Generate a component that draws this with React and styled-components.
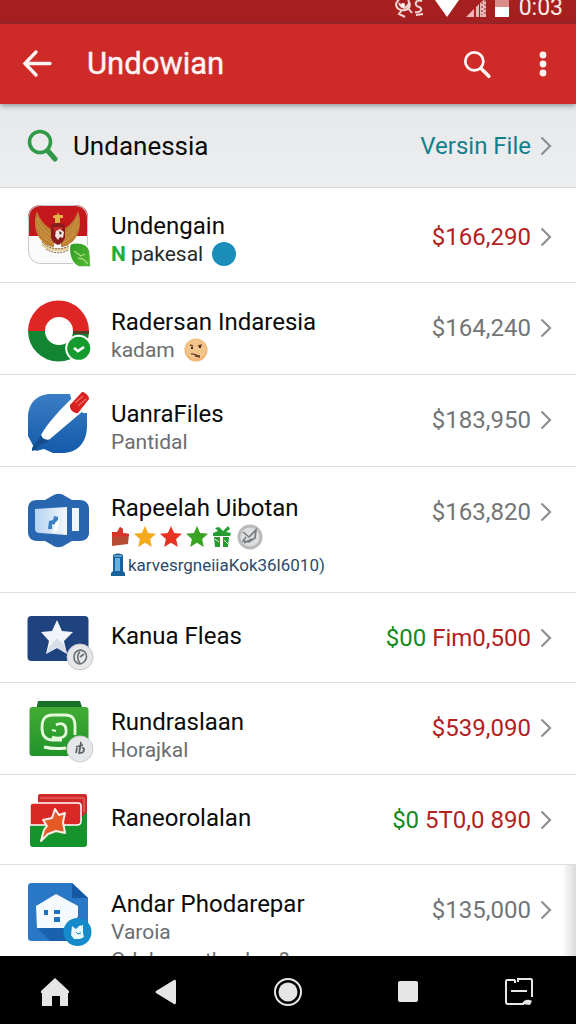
import React from "react";
import styled, { createGlobalStyle, css } from "styled-components";

const Global = createGlobalStyle`
  *, *::before, *::after { box-sizing: border-box; }
  body { margin: 0; font-family: Roboto, "Liberation Sans", sans-serif; background: #fff; color: #0b0b0b; }
  h1, h2, p, ul { margin: 0; padding: 0; }
  a { color: inherit; text-decoration: none; }
  button { border: 0; padding: 0; background: none; color: inherit; cursor: pointer; display: flex; align-items: center; justify-content: center; }
  svg { display: block; flex: none; }
`;

const Screen = styled.div`
  display: flex;
  flex-direction: column;
  height: 100vh;
  overflow: hidden;
`;

const StatusBar = styled.div`
  flex: none;
  display: flex;
  justify-content: flex-end;
  height: 24px;
  padding-right: 13px;
  overflow: hidden;
  background: #a62020;
  color: #fbeceb;
`;

const Clock = styled.span`
  margin-left: 10px;
  font-size: 23px;
  line-height: 16px;
`;

const AppBar = styled.header`
  position: relative;
  flex: none;
  display: flex;
  align-items: center;
  height: 80px;
  padding: 0 18px 0 20px;
  background: #cd2a28;
  color: #fff4f2;
  box-shadow: 0 1px 6px rgba(60, 60, 70, 0.6);
`;

const AppTitle = styled.h1`
  flex: 1;
  margin-left: 33px;
  font-size: 31px;
  line-height: 40px;
  font-weight: 400;
  -webkit-text-stroke: 0.4px currentColor;
`;

const IconButton = styled.button`
  width: ${(p) => p.$w}px;
  height: 48px;
  margin-left: ${(p) => p.$gap || 0}px;
`;

const FilterBar = styled.div`
  flex: none;
  display: flex;
  align-items: center;
  height: 84px;
  padding: 0 24px 0 26px;
  background: linear-gradient(#e6e8eb, #eceeef);
  border-bottom: 1px solid #d6d9dc;
`;

const FilterInput = styled.input`
  flex: 1;
  min-width: 0;
  margin-left: 15px;
  padding: 0;
  border: 0;
  outline: 0;
  background: none;
  color: #0b0b0b;
  font: 400 26px/32px Roboto, "Liberation Sans", sans-serif;
`;

const FilterLink = styled.a`
  display: flex;
  align-items: center;
  gap: 9px;
  color: #137f8c;
  font-size: 24px;
  line-height: 30px;
`;

const List = styled.ul`
  flex: 1;
  min-height: 0;
  overflow: hidden;
  list-style: none;
`;

const rowHeights = { lead: 95, double: 92, single: 90, triple: 126 };
const copyTops = { lead: 10, double: 11, single: 15, triple: 13 };

const Row = styled.li`
  min-height: ${(p) => rowHeights[p.$kind]}px;
  border-bottom: 1px solid #dcdfe1;
  ${(p) =>
    p.$shade &&
    css`
      background: linear-gradient(to left, rgba(0, 0, 0, 0.14), rgba(0, 0, 0, 0) 14px);
    `}
`;

const RowLink = styled.a`
  display: flex;
  align-items: flex-start;
  padding: 14px 24px 0;
`;

const Copy = styled.div`
  flex: 1;
  min-width: 0;
  margin-left: 14px;
  padding-top: ${(p) => copyTops[p.$kind]}px;
  white-space: nowrap;
`;

const RowTitle = styled.h2`
  font-size: 24px;
  line-height: 28px;
  font-weight: 400;
`;

const Sub = styled.p`
  display: flex;
  align-items: center;
  gap: 9px;
  font-size: 21px;
  line-height: 28px;
  color: ${(p) => p.$color || "#6b6d70"};
`;

const Badges = styled.div`
  display: flex;
  align-items: center;
  height: 30px;
  gap: 4px;
`;

const Code = styled.p`
  display: flex;
  align-items: center;
  gap: 3px;
  font-size: 17px;
  line-height: 26px;
  color: #2b4a6c;
`;

const Tag = styled.b`
  font-weight: 700;
  color: #1fae38;
`;

const Dot = styled.span`
  width: 24px;
  height: 24px;
  border-radius: 50%;
  background: #1a8dbb;
`;

const Amount = styled.div`
  display: flex;
  align-items: center;
  gap: 9px;
  padding-top: ${(p) => (p.$kind === "lead" ? 20 : 16)}px;
  font-size: 24px;
  line-height: 30px;
  white-space: nowrap;
  color: ${(p) => (p.$tone === "red" ? "#b3211f" : "#737577")};
`;

const Gain = styled.span`
  color: #168a1c;
`;

const NavBar = styled.nav`
  flex: none;
  display: grid;
  grid-template-columns: 110fr 112fr 132fr 108fr 114fr;
  align-items: center;
  height: 68px;
  padding-top: 3px;
  background: #000;
  color: #e6e6e6;
`;

const NavButton = styled.button`
  height: 56px;
`;

const Chevron = () => (
  <svg width="12" height="22" viewBox="0 0 12 22" fill="none" stroke="#8d9093" strokeWidth="2.2">
    <path d="M1.500 2.500 10 11 1.500 19.500" />
  </svg>
);

const Magnifier = ({ size, w }) => (
  <svg width={size} height={size} viewBox="0 0 32 32" fill="none" stroke="currentColor" strokeLinecap="round">
    <circle cx="12.5" cy="12.5" r="10" strokeWidth={w} />
    <path d="M20 20.5 28.5 29" strokeWidth={w + 1} />
  </svg>
);

const STAR = "M0-12 3.4-4.4 12-3.6 5.6 2.2 7.4 11 0 6.4-7.4 11-5.6 2.2-12-3.6-3.4-4.4Z";

const Star = ({ color }) => (
  <svg width="22" height="24" viewBox="-12 -12.5 24 25">
    <path d={STAR} fill={color} />
  </svg>
);

const Art = ({ children }) => (
  <svg width="73" height="70" viewBox="0 0 73 70" aria-hidden="true">
    {children}
  </svg>
);

const Garuda = () => (
  <Art>
    <defs>
      <clipPath id="flag"><rect x="4" y="3" width="60" height="59" rx="12" /></clipPath>
      <linearGradient id="leaf" x2="1" y2="1"><stop stopColor="#2c9c25" /><stop offset="1" stopColor="#56b832" /></linearGradient>
    </defs>
    <g clipPath="url(#flag)">
      <path fill="#fafafa" d="M4 3h60v60H4z" />
      <path fill="#c5181c" d="M4 3h60v31H4z" />
    </g>
    <rect x="4.5" y="3.5" width="59" height="58" rx="12" fill="none" stroke="#c9c9cd" />
    <g fill="#bd8134">
      <path d="M13 9c-4 11-2 22 4 29 4 5 9 7 13 7V29C22 25 15 17 13 9Z" />
      <path d="M54 9c4 11 2 22-4 29-4 5-9 7-13 7V29C45 25 52 17 54 9Z" />
    </g>
    <g fill="none" stroke="#d6a253" strokeWidth="0.8">
      <path d="M13 16c3 9 9 15 16 18M13 23c4 8 9 12 16 15M16 31c4 5 8 8 13 10M54 16c-3 9-9 15-16 18M54 23c-4 8-9 12-16 15M51 31c-4 5-8 8-13 10" />
    </g>
    <path d="M31 13h2l1-3 1 3h4v3h-3v6h-5v-6h-2v-2z" fill="#e3b247" />
    <path d="M27 23c4-3 10-3 14 0v13c-2 4-4 6-7 7-3-1-5-3-7-7z" fill="#8c1b1d" />
    <path d="M29 25h10l-3 6h-5z" fill="#c62a25" /><path d="m32 29 4-2 4 3-1 6-3-1-2 3-3-4z" fill="#f7e3df" />
    <path d="m35 29 3 2-2 2z" fill="#302024" />
    <path d="M18 42c8 8 24 8 32 0" fill="none" stroke="#e5cf9c" strokeWidth="3" />
    <path d="M18 40c8 9 24 9 32 0M22 47c7 5 17 5 24 0" fill="none" stroke="#735b3c" strokeWidth="0.9" strokeDasharray="2 1" />
    <path d="M46 42c8-3 19-1 20 8l1 15H55c-8-3-11-14-9-23Z" fill="url(#leaf)" stroke="#fff" strokeWidth="1.5" />
    <path d="m50 49 7 5 4-2M54 56l5 1 5 5" fill="none" stroke="#a5db80" strokeWidth="1.3" />
  </Art>
);

const Ring = () => (
  <Art>
    <path d="M4 34a30.500 30.500 0 0 1 61 0H49a14 14 0 0 0-28 0Z" fill="#de2624" />
    <path d="M4 34a30.500 30.500 0 0 0 61 0H49a14 14 0 0 1-28 0Z" fill="#128432" />
    <path d="M49 34h16v3H49z" fill="#543f23" />
    <circle cx="54.700" cy="51.300" r="13.500" fill="#fff" />
    <circle cx="54.700" cy="51.300" r="11.500" fill="#159b2e" />
    <path d="m50 51 4 3 6-4" fill="none" stroke="#fff" strokeWidth="2.700" />
  </Art>
);

const Pen = () => (
  <Art>
    <defs><linearGradient id="pen" x2="0" y2="1"><stop stopColor="#3b7ec5" /><stop offset="1" stopColor="#145aa9" /></linearGradient></defs>
    <path d="M27 5h20l16 16v16C63 54 53 64 38 64H29L20 60 12 62 4 47V29C4 14 13 5 27 5Z" fill="url(#pen)" />
    <path d="M45 2h22v22h-8L48 12Z" fill="#fff" />
    <path d="M48 9 59 22 26 50c-3 2-9-1-9-4 8-14 20-26 31-37Z" fill="#fff" />
    <path d="M58 3c2-1 8 5 7 7L54 24c-4 1-9-4-8-8Z" fill="#d7201f" />
    <path d="m51 14 8-7M54 17l8-7" stroke="#f16960" strokeWidth="1.500" fill="none" />
    <path d="m17 46 2 4 6 2c-6 4-11 3-13 9l-4 1c-1-6 5-7 9-16Z" fill="#154d8d" />
  </Art>
);

const Camera = () => (
  <Art>
    <defs><linearGradient id="screen" x2="1" y2="0"><stop stopColor="#b5d3f1" /><stop offset="1" stopColor="#f2f8fe" /></linearGradient></defs>
    <path d="M13 19h8l7-4c5-3 9-3 13 0l7 4h8c6 0 9 4 9 9v24c0 5-4 8-9 8h-8l-7 4c-4 3-9 3-13 0l-7-4h-8c-6 0-9-4-9-9V28c0-6 3-9 9-9Z" fill="#2867af" />
    <path d="m11 28 32-2v28l-27-2q-5 0-5-4Z" fill="url(#screen)" />
    <path d="M48 27h7v23h-7z" fill="#eef7ff" />
    <path d="m25 40 4-1 1-4 4 1v6l-2 2-4-1v5h-4z" fill="#3b82c4" /><path d="m31 42 4-4-1 12-5 2z" fill="#fff" />
  </Art>
);

const StarFlag = () => (
  <Art>
    <rect x="3.500" y="9" width="61" height="45" rx="4" fill="#1f437e" />
    <path d="M33 13 38 24 49 25 40 34 43 47 33 41 22 47 25 34 17 25 28 24Z" fill="#f1f4f9" />
    <path d="m25 40 8-9 8 8 2 8-10-6-11 6Z" fill="#c9d1e0" opacity=".6" />
    <circle cx="56" cy="50" r="13" fill="#e6e7e9" stroke="#c7c8cb" />
    <path d="M61 45c-5-4-11-1-11 5 0 6 6 9 10 5 3-3 3-7 1-10ZM56 45c-3 2-3 8 0 11M56 50l4-3" fill="none" stroke="#6d6f72" strokeWidth="1.600" />
  </Art>
);

const Box = () => (
  <Art>
    <defs><linearGradient id="box" x2="0" y2="1"><stop stopColor="#42ac34" /><stop offset="1" stopColor="#22932b" /></linearGradient></defs>
    <path d="M14 4h42l3 9H12Z" fill="#167126" />
    <rect x="5.500" y="10" width="59" height="49" rx="3" fill="url(#box)" />
    <path d="M38 43h-9c-7 0-11-4-11-12 0-9 3-13 11-13h12c7 0 10 3 10 11v9M28 40c10 3 15-1 14-7 0-6-5-8-10-5" fill="none" stroke="#e4fbdc" strokeWidth="2.800" />
    <path d="m28 33 4 1" stroke="#e4fbdc" strokeWidth="2" /><path d="M20 50c7 2 13 2 22 1" fill="none" stroke="#effbe9" strokeWidth="3" />
    <circle cx="56" cy="52" r="13" fill="#e6e7e9" stroke="#ceced0" />
    <path d="M57 45l-2 12M52 50l7-2M53 51l-1 5M58 51c3-1 3 5-2 5" fill="none" stroke="#5c5e61" strokeWidth="1.700" />
  </Art>
);

const Cards = () => (
  <Art>
    <rect x="14" y="5" width="49" height="30" rx="2" fill="#cf2929" />
    <path d="M16 9h44v14" fill="none" stroke="#f27b70" strokeWidth="1" />
    <path d="M6 32h48l9-9v32c0 2-1 3-3 3H9c-2 0-3-1-3-3Z" fill="#15932d" />
    <path d="M9 14h45c2 0 3 1 3 3v15c0 3-2 4-4 4H6V17c0-2 1-3 3-3Z" fill="#da2827" stroke="#fff" strokeWidth="1.500" />
    <path d="m31 20 4 6 6-2-2 9 2 11-9-2-8 3-7 7 3-11 3-4-4-6 9-2Z" fill="#e65a27" stroke="#fff0e8" strokeWidth="2" strokeLinejoin="round" />
  </Art>
);

const House = () => (
  <Art>
    <path d="M8 4h40l16 15v40c0 2-1 3-3 3H8c-3 0-4-1-4-3V8c0-3 1-4 4-4Z" fill="#2878c6" />
    <path d="M48 4v15h16Z" fill="#1659a3" /><path d="m14 50 12 12h30L48 42Z" fill="#1962ad" />
    <path d="m12 27 20-12 22 12v10l-6 12H13Z" fill="#f5faff" />
    <path d="M20 31h4v5h-4zM30 31h6v4h-6zM30 38h6v5h-6z" fill="#2172be" />
    <circle cx="53.500" cy="53" r="14" fill="#168bcb" />
    <path d="m48 47 4 3 3-3 4-1v8l1 4-4 2h-6l-3-4Z" fill="#e9faff" /><path d="m52 53 2 2 3-1" stroke="#168bcb" fill="none" />
  </Art>
);

const Face = () => (
  <svg width="24" height="24" viewBox="0 0 24 24">
    <circle cx="12" cy="12" r="11.500" fill="#efb879" /><circle cx="12" cy="11" r="10" fill="#f3c48b" />
    <path d="m6 7 3 1M14 8l4-1M7 16c3-1 5 2 9 2M11 18l5 1" fill="none" stroke="#6e432a" strokeWidth="1.400" />
    <path d="M7 9h2v2H7zM15 8h2v2h-2z" fill="#43291f" />
  </svg>
);

const Thumb = () => (
  <svg width="19" height="22" viewBox="0 0 19 22">
    <path d="M1 7h5l3-6 3 2v4l6 1-1 10-16 2z" fill="#b84b33" /><path d="M1 6h5l3-5 3 2v4l6 1v2L1 11z" fill="#da352d" />
  </svg>
);

const Gift = () => (
  <svg width="20" height="24" viewBox="0 0 20 24" fill="#249c31">
    <path d="M1 8 6 6 3 3l4-1 4 4 5-5 2 3-4 3 5 1-1 3H1zM2 12h6v10H3zM11 12h6l-1 10h-5z" />
    <path d="m3 14 4 3M12 15l4 4" stroke="#d5f6c9" />
  </svg>
);

const Medal = () => (
  <svg width="27" height="26" viewBox="0 0 27 26">
    <circle cx="14" cy="13" r="12.500" fill="#b9babb" /><circle cx="14" cy="13" r="9.500" fill="#dddedf" />
    <path d="m7 8 6 5 7-7-1 8-6 4-6-1 3-4M8 19l8-4" fill="none" stroke="#77797b" strokeWidth="1.600" />
  </svg>
);

const Phone = () => (
  <svg width="14" height="24" viewBox="0 0 14 24">
    <path d="M2 2c3-2 7-2 10 0v16l2 2v3H0v-3l2-2Z" fill="#16629e" /><path d="M4 5h5v13H4z" fill="#69b1da" /><path d="M3 3h8" stroke="#a8d6ee" />
  </svg>
);

const rows = [
  { kind: "lead", art: Garuda, title: "Undengain", sub: <Sub $color="#27292b"><span><Tag>N</Tag> pakesal</span><Dot /></Sub>, amount: "$166,290", tone: "red" },
  { kind: "double", art: Ring, title: "Radersan Indaresia", sub: <Sub><span>kadam</span> <Face /></Sub>, amount: "$164,240" },
  { kind: "double", art: Pen, title: "UanraFiles", sub: <Sub>Pantidal</Sub>, amount: "$183,950" },
  {
    kind: "triple", art: Camera, title: "Rapeelah Uibotan", amount: "$163,820",
    sub: (
      <>
        <Badges><Thumb /><Star color="#f5a91d" /><Star color="#e93322" /><Star color="#3aa322" /><Gift /><Medal /></Badges>
        <Code><Phone />karvesrgneiiaKok36l6010)</Code>
      </>
    ),
  },
  { kind: "single", art: StarFlag, title: "Kanua Fleas", gain: "$00", amount: "Fim0,500", tone: "red" },
  { kind: "double", art: Box, title: "Rundraslaan", sub: <Sub>Horajkal</Sub>, amount: "$539,090", tone: "red" },
  { kind: "single", art: Cards, title: "Raneorolalan", gain: "$0", amount: "5T0,0 890", tone: "red" },
  { kind: "double", art: House, title: "Andar Phodarepar", sub: <><Sub>Varoia</Sub><Sub>Odulonwuth: ubas?</Sub></>, amount: "$135,000", shade: true },
];

export default function App() {
  return (
    <Screen>
      <Global />
      <StatusBar>
        <svg width="115" height="18" viewBox="0 0 115 18" aria-hidden="true">
          <g fill="none" stroke="#f3d5d3" strokeWidth="2">
            <path d="M5 0c-5 3-3 9 2 10 8 1 11-4 7-10M5 3c4 8 9 4 10 0M8 10l-3 4 6 3M14 8l4 5M28 1c-6-2-9 4-3 6 5 2 1 6-4 5M22 15l7-1" />
          </g>
          <circle cx="9" cy="5" r="2" fill="#fff" />
          <path d="M41 0h24L53 17Z" fill="#fff" />
          <path d="M72 17 80 9v8zM82 17V7l3-3v13zM86 17V3l6-5v19z" fill="#e6b9b6" />
          <path d="M88 2v13M91 0v16" stroke="#a62020" strokeDasharray="2 2" />
          <path d="M101 0h14v17h-14z" fill="#d98c8a" /><path d="M101 7h14v10h-14z" fill="#fff" />
        </svg>
        <Clock>0:03</Clock>
      </StatusBar>
      <AppBar>
        <IconButton $w={34} aria-label="Back">
          <svg width="32" height="30" viewBox="0 0 32 30" fill="none" stroke="currentColor" strokeWidth="3.400" strokeLinecap="round">
            <path d="M29 14.500H4M15 3 4 14.500 15 26" />
          </svg>
        </IconButton>
        <AppTitle>Undowian</AppTitle>
        <IconButton $w={30} aria-label="Search"><Magnifier size={29} w={3} /></IconButton>
        <IconButton $w={30} $gap={36} aria-label="More">
          <svg width="8" height="26" viewBox="0 0 8 26" fill="currentColor">
            <circle cx="4" cy="4" r="3.400" /><circle cx="4" cy="13" r="3.400" /><circle cx="4" cy="22" r="3.400" />
          </svg>
        </IconButton>
      </AppBar>
      <FilterBar>
        <svg width="32" height="34" viewBox="0 0 32 34" fill="none" stroke="#319a48" strokeLinecap="round" aria-hidden="true">
          <circle cx="14" cy="13" r="10.500" strokeWidth="3.600" />
          <path d="m22 22 7 8" strokeWidth="5" />
        </svg>
        <FilterInput type="text" aria-label="Filter" defaultValue="Undanessia" />
        <FilterLink href="#files">Versin File<Chevron /></FilterLink>
      </FilterBar>
      <List>
        {rows.map(({ kind, art: Picture, title, sub, gain, amount, tone, shade }) => (
          <Row key={title} $kind={kind} $shade={shade}>
            <RowLink href="#item">
              <Picture />
              <Copy $kind={kind}>
                <RowTitle>{title}</RowTitle>
                {sub}
              </Copy>
              <Amount $tone={tone} $kind={kind}>
                <span>{gain && <Gain>{gain} </Gain>}{amount}</span>
                <Chevron />
              </Amount>
            </RowLink>
          </Row>
        ))}
      </List>
      <NavBar>
        <NavButton aria-label="Home">
          <svg width="30" height="30" viewBox="0 0 30 30" fill="currentColor"><path d="m15 1 14 13v2h-1v13h-8V19h-8v10H2V16H1v-2Z" /></svg>
        </NavButton>
        <NavButton aria-label="Back">
          <svg width="22" height="26" viewBox="0 0 22 26" fill="currentColor"><path d="M1 12 19 1q2-1 2 2v20q0 3-2 2L1 14q-1-1 0-2Z" /></svg>
        </NavButton>
        <NavButton aria-label="Overview">
          <svg width="30" height="30" viewBox="0 0 30 30"><circle cx="15" cy="15" r="13" fill="none" stroke="currentColor" strokeWidth="2" /><circle cx="15" cy="15" r="9.500" fill="currentColor" /></svg>
        </NavButton>
        <NavButton aria-label="Recent">
          <svg width="22" height="23" viewBox="0 0 22 23"><rect x="1" y="1" width="20" height="21" rx="2" fill="currentColor" /></svg>
        </NavButton>
        <NavButton aria-label="Screenshot">
          <svg width="30" height="29" viewBox="0 0 30 29" fill="none" stroke="currentColor" strokeWidth="2">
            <path d="M11 3H3q-1 0-1 2v20q0 2 2 2h16M11 3v3M14 5V2h13l1 1v17M7 14h16" />
            <path d="M18 27q2-5 8-4l2 1-2 4Z" fill="currentColor" stroke="none" />
          </svg>
        </NavButton>
      </NavBar>
    </Screen>
  );
}
